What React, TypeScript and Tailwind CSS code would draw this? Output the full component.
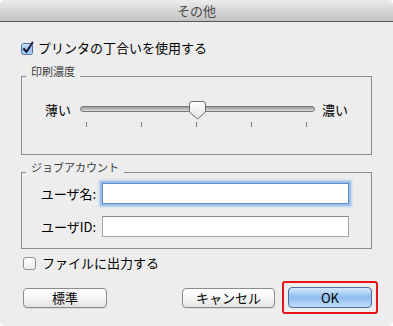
const font = { fontFamily: '"Noto Sans CJK JP", "Noto Sans", sans-serif' }

function CheckedBox() {
  return (
    <svg width="15" height="15" viewBox="0 0 15 15" className="block">
      <defs>
        <linearGradient id="cb" x1="0" y1="0" x2="0" y2="1">
          <stop offset="0" stopColor="#d9e9fb" />
          <stop offset="0.5" stopColor="#8fbdf0" />
          <stop offset="1" stopColor="#b9d8f8" />
        </linearGradient>
      </defs>
      <rect x="1.5" y="2.5" width="11" height="11" rx="2" fill="url(#cb)" stroke="#4b6f9e" />
      <path d="M4 8 L6.5 11 L12.5 1.5" fill="none" stroke="#1c1c3a" strokeWidth="2" strokeLinecap="round" strokeLinejoin="round" />
    </svg>
  )
}

function EmptyBox() {
  return (
    <div className="h-[13px] w-[13px] rounded-[3px] border border-[#8e8e8e] bg-gradient-to-b from-white to-[#ececec] shadow-[inset_0_1px_0_#fff]" />
  )
}

function Thumb() {
  return (
    <svg width="17" height="19" viewBox="0 0 17 19" className="block">
      <defs>
        <linearGradient id="th" x1="0" y1="0" x2="0" y2="1">
          <stop offset="0" stopColor="#ffffff" />
          <stop offset="1" stopColor="#e2e2e2" />
        </linearGradient>
      </defs>
      <path d="M3 0.5 H14 Q16.5 0.5 16.5 3 V11 L8.5 18 L0.5 11 V3 Q0.5 0.5 3 0.5 Z" fill="url(#th)" stroke="#6e6e6e" />
    </svg>
  )
}

function Group({ title, children, className }: { title: string; children: React.ReactNode; className: string }) {
  return (
    <div className={`relative mx-[21px] border border-[#8c8c8c] ${className}`}>
      <span className="absolute left-[4px] top-[-11px] h-[12px] whitespace-nowrap bg-[#ededed] px-[5px] text-[11px] leading-[11px] text-[#3a3a3a]">
        {title}
      </span>
      {children}
    </div>
  )
}

function Button({ label, className }: { label: string; className: string }) {
  return (
    <button
      className={`flex h-[20px] items-center justify-center rounded-[4px] border border-[#8b8b8b] bg-gradient-to-b from-white via-[#f6f6f6] to-[#e2e2e2] text-[13px] leading-none text-black shadow-[0_1px_0_rgba(0,0,0,0.08)] ${className}`}
    >
      {label}
    </button>
  )
}

export default function App() {
  return (
    <div className="h-[326px] w-[393px] bg-white" style={font}>
      <div className="flex h-full w-[393px] flex-col overflow-hidden rounded-[5px] bg-[#ededed]">
        {/* Title bar */}
        <div className="flex h-[22px] shrink-0 items-center justify-center border-b border-[#5a5a5a] bg-gradient-to-b from-[#ececec] to-[#c2c2c2] text-[13px] text-[#4a4a4a]">
          その他
        </div>

        <label className="mt-[18px] ml-[20px] flex h-[16px] items-center gap-[3px] text-[13px] text-black">
          <CheckedBox />
          <span>プリンタの丁合いを使用する</span>
        </label>

        {/* 印刷濃度 */}
        <Group title="印刷濃度" className="mt-[20px] h-[79px]">
          <div className="mt-[23px] flex h-[18px] items-center pl-[23px] text-[13px] leading-none text-black">
            <span className="whitespace-nowrap">薄い</span>
            <div className="relative ml-[9px] w-[235px] shrink-0">
              <div className="h-[6px] rounded-full border border-[#7a7a7a] bg-gradient-to-b from-[#9a9a9a] to-[#dcdcdc]" />
              <div className="absolute left-[109px] top-[-5px]">
                <Thumb />
              </div>
            </div>
            <span className="ml-[7px] whitespace-nowrap">濃い</span>
          </div>
          <div className="mt-[4px] ml-[64px] flex w-[221px] justify-between">
            {[0, 1, 2, 3, 4].map((i) => (
              <div key={i} className="h-[5px] w-px bg-[#7c7c7c]" />
            ))}
          </div>
        </Group>

        {/* ジョブアカウント */}
        <Group title="ジョブアカウント" className="mt-[17px] h-[77px]">
          <div className="mt-[10px] flex flex-col gap-[12px] text-[13px] text-black">
            <div className="flex items-center">
              <span className="w-[74px] whitespace-nowrap text-right">ユーザ名:</span>
              <div className="ml-[6px] h-[21px] w-[247px] border border-[#5f8fc9] bg-white shadow-[0_0_0_2px_#9cc0ea,0_0_2px_3px_#b7d2f0]" />
            </div>
            <div className="flex items-center">
              <span className="w-[74px] whitespace-nowrap text-right">ユーザID:</span>
              <div className="ml-[6px] h-[21px] w-[247px] border border-[#a5a5a5] border-t-[#8a8a8a] bg-white" />
            </div>
          </div>
        </Group>

        <label className="mt-[6px] ml-[23px] flex h-[16px] items-center gap-[6px] text-[13px] text-black">
          <EmptyBox />
          <span>ファイルに出力する</span>
        </label>

        {/* Buttons */}
        <div className="mt-[10px] flex items-center pl-[23px] pr-[15px]">
          <Button label="標準" className="w-[84px]" />
          <Button label="キャンセル" className="ml-auto w-[93px]" />
          <div className="ml-[7px] rounded-[3px] border-2 border-[#e8141c] p-[4px]">
            <button className="flex h-[21px] w-[84px] items-center justify-center rounded-[4px] border border-[#4b6c9c] bg-gradient-to-b from-[#d6e8fb] via-[#8ebdf1] to-[#c0dcf9] text-[13px] leading-none text-black">
              OK
            </button>
          </div>
        </div>
      </div>
    </div>
  )
}
